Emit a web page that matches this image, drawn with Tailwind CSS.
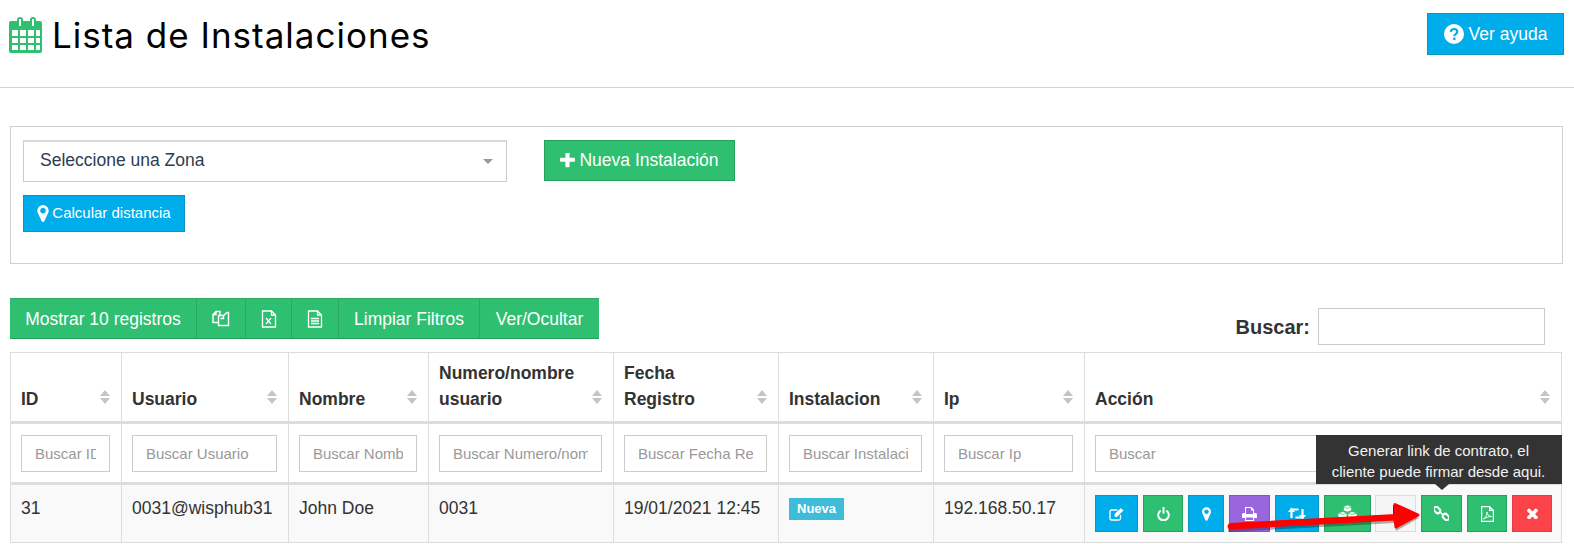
<!DOCTYPE html>
<html lang="es">
<head>
  <meta charset="UTF-8">
  <title>Lista de Instalaciones</title>
  <script src="https://cdn.jsdelivr.net/npm/@tailwindcss/browser@4"></script>
</head>
<body class="bg-white font-['Liberation_Sans',Arial,sans-serif] text-[17.500px] text-[#333] h-[544px] w-[1574px] overflow-hidden relative">
  <!-- cabecera -->
  <header class="h-[88px] border-b border-[#d4d4d4] flex items-start justify-between pl-[9px] pr-[10px]">
    <h1 class="flex items-center gap-[9px] pt-[15px] text-black font-['Inter',sans-serif] text-[35px] tracking-[1px] leading-[40px] font-normal">
      <svg class="w-[34px] h-[36px]" viewBox="0 0 34 36"><path fill="#2fbf71" fill-rule="evenodd" d="M3 4h5V3a3 3 0 0 1 6 0v1h7V3a3 3 0 0 1 6 0v1h4a2 2 0 0 1 2 2v28a2 2 0 0 1-2 2H2a2 2 0 0 1-2-2V6a2 2 0 0 1 2-2zM10 2v7h2V2zM23 2v7h2V2zM3 13v6h6v-6zm8 0v6h6v-6zm8 0v6h6v-6zm8 0v6h4v-6zM3 21v5h6v-5zm8 0v5h6v-5zm8 0v5h6v-5zm8 0v5h4v-5zM3 28v5h6v-5zm8 0v5h6v-5zm8 0v5h6v-5zm8 0v5h4v-5z"/></svg>
      Lista de Instalaciones
    </h1>
    <button class="mt-[13px] w-[137px] h-[42px] bg-[#00adeb] border border-[#0e93c6] text-white text-[17.500px] flex items-center justify-center gap-[5px]">
      <svg class="w-[20px] h-[20px]" viewBox="0 0 20 20"><circle cx="10" cy="10" r="10" fill="#fff"/><path d="M6.800 7.800C7 5.800 8.400 5 10 5c1.900 0 3.300 1.100 3.300 2.800 0 2.400-3 2.400-3 4.400" fill="none" stroke="#00adeb" stroke-width="2.200"/><rect x="9.100" y="13.600" width="2.400" height="2.400" fill="#00adeb"/></svg>
      Ver ayuda
    </button>
  </header>

  <!-- filtros -->
  <section class="ml-[10px] mt-[38px] w-[1553px] h-[138px] border border-[#ccd2d2] pl-[12px] pt-[13px]">
    <div class="flex items-start gap-[37px]">
      <div class="w-[484px] h-[42px] border border-[#cccccc] border-t-[2px] border-t-[#d8d8d8] flex items-center justify-between pl-[16px] pr-[13px] text-[#2c3e50]">
        <span class="-mt-[2px]">Seleccione una Zona</span>
        <span class="w-0 h-0 border-x-[5px] border-x-transparent border-t-[5px] border-t-[#999]"></span>
      </div>
      <button class="w-[191px] h-[41px] bg-[#2fbf71] border border-[#25a05e] text-white flex items-center justify-center gap-[4px]">
        <svg class="w-[15px] h-[15px]" viewBox="192 192 1408 1408" fill="#fff"><path d="M1600 736v192q0 40-28 68t-68 28h-416v416q0 40-28 68t-68 28h-192q-40 0-68-28t-28-68v-416h-416q-40 0-68-28t-28-68v-192q0-40 28-68t68-28h416v-416q0-40 28-68t68-28h192q40 0 68 28t28 68v416h416q40 0 68 28t28 68z"/></svg>
        Nueva Instalación
      </button>
    </div>
    <button class="mt-[13px] w-[162px] h-[37px] bg-[#00adeb] border border-[#0e93c6] text-white text-[15px] flex items-center justify-center gap-[3px]">
      <svg class="w-[12px] h-[17px]" viewBox="0 128 1024 1536" fill="#fff"><path d="M768 640q0-106-75-181t-181-75-181 75-75 181 75 181 181 75 181-75 75-181zm256 0q0 109-33 179l-364 774q-16 33-47.500 52t-67.500 19-67.500-19-46.500-52l-365-774q-33-70-33-179 0-212 150-362t362-150 362 150 150 362z"/></svg>
      Calcular distancia
    </button>
  </section>

  <!-- barra -->
  <div class="ml-[10px] mt-[34px] flex items-start justify-between w-[1553px] h-[54px]">
    <div class="flex h-[41px] bg-[#2fbf71] border-y border-t-[#2fa866] border-b-[#25a05e] text-white">
      <span class="w-[187px] pt-[1px] flex items-center justify-center border-r border-[#29aa63]">Mostrar 10 registros</span>
      <span class="w-[49px] flex items-center justify-center border-r border-[#29aa63]">
        <svg class="w-[18px] h-[18px]" viewBox="0 0 18 18" fill="none" stroke="#fff" stroke-width="1.400"><path d="M8 5V1.500H4L1 4.500v8h5M4 1.500v3H1"/><path d="M6.500 5.500h5l3.500-3h1.500v13h-10zM11.500 5.500v3h-3"/></svg>
      </span>
      <span class="w-[46px] flex items-center justify-center border-r border-[#29aa63]">
        <svg class="w-[16px] h-[18px]" viewBox="0 0 16 18" fill="none" stroke="#fff" stroke-width="1.300"><path d="M1.500 1h9l4 4v12h-13zM10.500 1v4h4"/><path d="M5 8l5 6M10 8l-5 6" stroke-width="1.200"/></svg>
      </span>
      <span class="w-[47px] flex items-center justify-center border-r border-[#29aa63]">
        <svg class="w-[16px] h-[18px]" viewBox="0 0 16 18" fill="none" stroke="#fff" stroke-width="1.300"><path d="M1.500 1h9l4 4v12h-13zM10.500 1v4h4M4 8.500h8M4 11h8M4 13.500h8"/></svg>
      </span>
      <span class="w-[141px] pt-[1px] flex items-center justify-center border-r border-[#29aa63]">Limpiar Filtros</span>
      <span class="w-[119px] pt-[1px] flex items-center justify-center">Ver/Ocultar</span>
    </div>
    <label class="flex items-center gap-[8px] mt-[10px] mr-[18px] font-bold text-[20px]">
      Buscar:
      <input class="w-[227px] h-[37px] border border-[#cccccc] bg-white" type="text">
    </label>
  </div>

  <!-- tabla -->
  <table class="ml-[10px] w-[1552px] table-fixed border-collapse">
    <colgroup>
      <col class="w-[111px]"><col class="w-[167px]"><col class="w-[140px]"><col class="w-[185px]"><col class="w-[165px]"><col class="w-[155px]"><col class="w-[151px]"><col>
    </colgroup>
    <thead>
      <tr class="h-[70px] text-left font-bold text-[#333]">
        <th class="border border-[#dddddd] border-b-[3px] pl-[10px] pr-[11px] pb-[9px] align-bottom leading-[26px]"><div class="flex items-end justify-between">ID<span class="flex flex-col gap-[2px] mb-[8px]"><i class="block border-x-[5px] border-x-transparent border-b-[6px] border-b-[#c4c4c4]"></i><i class="block border-x-[5px] border-x-transparent border-t-[6px] border-t-[#c4c4c4]"></i></span></div></th>
        <th class="border border-[#dddddd] border-b-[3px] pl-[10px] pr-[11px] pb-[9px] align-bottom leading-[26px]"><div class="flex items-end justify-between">Usuario<span class="flex flex-col gap-[2px] mb-[8px]"><i class="block border-x-[5px] border-x-transparent border-b-[6px] border-b-[#c4c4c4]"></i><i class="block border-x-[5px] border-x-transparent border-t-[6px] border-t-[#c4c4c4]"></i></span></div></th>
        <th class="border border-[#dddddd] border-b-[3px] pl-[10px] pr-[11px] pb-[9px] align-bottom leading-[26px]"><div class="flex items-end justify-between">Nombre<span class="flex flex-col gap-[2px] mb-[8px]"><i class="block border-x-[5px] border-x-transparent border-b-[6px] border-b-[#c4c4c4]"></i><i class="block border-x-[5px] border-x-transparent border-t-[6px] border-t-[#c4c4c4]"></i></span></div></th>
        <th class="border border-[#dddddd] border-b-[3px] pl-[10px] pr-[11px] pb-[9px] align-bottom leading-[26px]"><div class="flex items-end justify-between"><span>Numero/nombre<br>usuario</span><span class="flex flex-col gap-[2px] mb-[8px]"><i class="block border-x-[5px] border-x-transparent border-b-[6px] border-b-[#c4c4c4]"></i><i class="block border-x-[5px] border-x-transparent border-t-[6px] border-t-[#c4c4c4]"></i></span></div></th>
        <th class="border border-[#dddddd] border-b-[3px] pl-[10px] pr-[11px] pb-[9px] align-bottom leading-[26px]"><div class="flex items-end justify-between"><span>Fecha<br>Registro</span><span class="flex flex-col gap-[2px] mb-[8px]"><i class="block border-x-[5px] border-x-transparent border-b-[6px] border-b-[#c4c4c4]"></i><i class="block border-x-[5px] border-x-transparent border-t-[6px] border-t-[#c4c4c4]"></i></span></div></th>
        <th class="border border-[#dddddd] border-b-[3px] pl-[10px] pr-[11px] pb-[9px] align-bottom leading-[26px]"><div class="flex items-end justify-between">Instalacion<span class="flex flex-col gap-[2px] mb-[8px]"><i class="block border-x-[5px] border-x-transparent border-b-[6px] border-b-[#c4c4c4]"></i><i class="block border-x-[5px] border-x-transparent border-t-[6px] border-t-[#c4c4c4]"></i></span></div></th>
        <th class="border border-[#dddddd] border-b-[3px] pl-[10px] pr-[11px] pb-[9px] align-bottom leading-[26px]"><div class="flex items-end justify-between">Ip<span class="flex flex-col gap-[2px] mb-[8px]"><i class="block border-x-[5px] border-x-transparent border-b-[6px] border-b-[#c4c4c4]"></i><i class="block border-x-[5px] border-x-transparent border-t-[6px] border-t-[#c4c4c4]"></i></span></div></th>
        <th class="border border-[#dddddd] border-b-[3px] pl-[10px] pr-[11px] pb-[9px] align-bottom leading-[26px]"><div class="flex items-end justify-between">Acción<span class="flex flex-col gap-[2px] mb-[8px]"><i class="block border-x-[5px] border-x-transparent border-b-[6px] border-b-[#c4c4c4]"></i><i class="block border-x-[5px] border-x-transparent border-t-[6px] border-t-[#c4c4c4]"></i></span></div></th>
      </tr>
      <tr class="h-[61px] text-[15px]">
        <td class="border border-[#dddddd] border-b-[3px] pl-[10px] pr-[11px]"><input class="w-full h-[37px] border border-[#cccccc] px-[13px] placeholder:text-[#999]" placeholder="Buscar ID"></td>
        <td class="border border-[#dddddd] border-b-[3px] pl-[10px] pr-[11px]"><input class="w-full h-[37px] border border-[#cccccc] px-[13px] placeholder:text-[#999]" placeholder="Buscar Usuario"></td>
        <td class="border border-[#dddddd] border-b-[3px] pl-[10px] pr-[11px]"><input class="w-full h-[37px] border border-[#cccccc] px-[13px] placeholder:text-[#999]" placeholder="Buscar Nombre"></td>
        <td class="border border-[#dddddd] border-b-[3px] pl-[10px] pr-[11px]"><input class="w-full h-[37px] border border-[#cccccc] px-[13px] placeholder:text-[#999]" placeholder="Buscar Numero/nombre usuario"></td>
        <td class="border border-[#dddddd] border-b-[3px] pl-[10px] pr-[11px]"><input class="w-full h-[37px] border border-[#cccccc] px-[13px] placeholder:text-[#999]" placeholder="Buscar Fecha Registro"></td>
        <td class="border border-[#dddddd] border-b-[3px] pl-[10px] pr-[11px]"><input class="w-full h-[37px] border border-[#cccccc] px-[13px] placeholder:text-[#999]" placeholder="Buscar Instalacion"></td>
        <td class="border border-[#dddddd] border-b-[3px] pl-[10px] pr-[11px]"><input class="w-full h-[37px] border border-[#cccccc] px-[13px] placeholder:text-[#999]" placeholder="Buscar Ip"></td>
        <td class="border border-[#dddddd] border-b-[3px] pl-[10px] pr-[11px]"><input class="w-full h-[37px] border border-[#cccccc] px-[13px] placeholder:text-[#999]" placeholder="Buscar"></td>
      </tr>
    </thead>
    <tbody>
      <tr class="h-[59px] bg-[#f9f9f9] align-top">
        <td class="border border-[#dddddd] px-[10px] pt-[10px]">31</td>
        <td class="border border-[#dddddd] px-[10px] pt-[10px]">0031@wisphub31</td>
        <td class="border border-[#dddddd] px-[10px] pt-[10px]">John Doe</td>
        <td class="border border-[#dddddd] px-[10px] pt-[10px]">0031</td>
        <td class="border border-[#dddddd] px-[10px] pt-[10px]">19/01/2021 12:45</td>
        <td class="border border-[#dddddd] px-[10px] pt-[13px]"><span class="block w-fit bg-[#3fbcd9] text-white font-bold text-[13px] leading-[22px] px-[8px]">Nueva</span></td>
        <td class="border border-[#dddddd] px-[10px] pt-[10px]">192.168.50.17</td>
        <td class="border border-[#dddddd] pl-[10px] pt-[10px]">
          <div class="flex items-start h-[37px]">
            <span class="w-[43px] h-[37px] bg-[#00adeb] border border-[#0e93c6] flex items-center justify-center">
              <svg class="w-[16px] h-[14px]" viewBox="0 0 16 14" fill="none" stroke="#fff" stroke-width="1.300"><path d="M11.500 8v3.500a1.500 1.500 0 0 1-1.500 1.500H2.500A1.500 1.500 0 0 1 1 11.500v-7A1.500 1.500 0 0 1 2.500 3h6"/><path d="M6 7l6-5.500 2 2L8 9.500H6z" fill="#fff" stroke-width=".8"/></svg>
            </span>
            <span class="ml-[5px] w-[40px] h-[37px] bg-[#2fbf71] border border-[#25a05e] flex items-center justify-center">
              <svg class="w-[13px] h-[14px]" viewBox="0 0 13 14" fill="none" stroke="#fff" stroke-width="2"><path d="M3.600 3.600a5.300 5.300 0 1 0 5.800 0M6.500 0v6.500"/></svg>
            </span>
            <span class="ml-[5px] w-[36px] h-[37px] bg-[#00adeb] border border-[#0e93c6] flex items-center justify-center">
              <svg class="w-[9px] h-[14px]" viewBox="0 128 1024 1536" fill="#fff"><path d="M768 640q0-106-75-181t-181-75-181 75-75 181 75 181 181 75 181-75 75-181zm256 0q0 109-33 179l-364 774q-16 33-47.500 52t-67.500 19-67.500-19-46.500-52l-365-774q-33-70-33-179 0-212 150-362t362-150 362 150 150 362z"/></svg>
            </span>
            <span class="ml-[5px] w-[41px] h-[37px] bg-[#9966dd] border border-[#8355bd] flex items-center justify-center">
              <svg class="w-[15px] h-[14px]" viewBox="0 0 15 14" fill="#fff"><path fill-rule="evenodd" d="M3 0h6.500L12 2.500V6h1.500A1.500 1.500 0 0 1 15 7.500V11h-3v3H3v-3H0V7.500A1.500 1.500 0 0 1 1.500 6H3zM4 1v6h7V3.500H9V1zM4 10.500V13h7v-2.500z"/></svg>
            </span>
            <span class="ml-[5px] w-[44px] h-[37px] bg-[#00adeb] border border-[#0e93c6] flex items-center justify-center">
              <svg class="w-[18px] h-[13px] -mt-[1px]" viewBox="0 0 18 13" fill="none" stroke="#fff" stroke-width="2.200"><path d="M3.500 11V2.500h7M14.500 2v8.500h-7"/><path d="M0 5l3.500-4.500L7 5zM11 8l3.500 4.500L18 8z" fill="#fff" stroke="none"/></svg>
            </span>
            <span class="ml-[5px] w-[47px] h-[37px] bg-[#2fbf71] border border-[#25a05e] flex items-center justify-center">
              <svg class="w-[19px] h-[14px] -mt-[3px]" viewBox="0 0 19 14" fill="#fff" stroke="#2fbf71" stroke-width=".7"><path d="M9.500 0l4 1.500v4l-4 1.500-4-1.500v-4zM5 6.500l4 1.500v4.500L5 14l-5-1.500v-4.500zM14 6.500l5 1.500v4.500L14 14l-4-1.500V8z"/><path d="M5.500 2l4 1.500 4-1.500M0 8l5 1.500L9 8M10 8l4 1.500L19 8" fill="none"/></svg>
            </span>
            <span class="ml-[4px] w-[41px] h-[37px] bg-[#f5f5f5] border border-[#dddddd] flex items-center justify-center">
              <span class="block w-[6px] h-[14px] bg-[#333] -mt-[4px]"></span>
            </span>
            <span class="ml-[5px] w-[41px] h-[37px] bg-[#2fbf71] border border-[#25a05e] flex items-center justify-center">
              <svg class="w-[15px] h-[15px]" viewBox="0 0 15 15" fill="none" stroke="#fff" stroke-width="2"><rect x="-.5" y="1.600" width="7" height="4.800" rx="2.400" transform="rotate(45 3 4)"/><rect x="8.500" y="8.600" width="7" height="4.800" rx="2.400" transform="rotate(45 12 11)"/><path d="M6 6l3 3" stroke-width="1.600"/></svg>
            </span>
            <span class="ml-[5px] w-[40px] h-[37px] bg-[#2fbf71] border border-[#25a05e] flex items-center justify-center">
              <svg class="w-[13px] h-[16px]" viewBox="0 0 13 16" fill="none" stroke="#fff" stroke-width="1.200"><path d="M.6.600h8l3.800 3.800v11H.6zM8.600.600v3.800h3.800"/><path d="M2.500 13c2-1 3.500-4 3.500-7 0 2.500 1.500 4 4.500 4.500-3 0-5.500 1-8 2.500z" stroke-width=".9"/></svg>
            </span>
            <span class="ml-[5px] w-[40px] h-[37px] bg-[#fb4349] border border-[#e63c42] flex items-center justify-center">
              <svg class="w-[11px] h-[11px]" viewBox="306 306 1184 1184" fill="#fff"><path d="M1490 1322q0 40-28 68l-136 136q-28 28-68 28t-68-28l-294-294-294 294q-28 28-68 28t-68-28l-136-136q-28-28-28-68t28-68l294-294-294-294q-28-28-28-68t28-68l136-136q28-28 68-28t68 28l294 294 294-294q28-28 68-28t68 28l136 136q28 28 28 68t-28 68l-294 294 294 294q28 28 28 68z"/></svg>
            </span>
          </div>
        </td>
      </tr>
    </tbody>
  </table>

  <!-- tooltip sobre la tabla -->
  <div class="absolute left-[1316px] top-[435px] w-[246px] h-[49px] bg-[#333333] text-[#f2f2f2] text-[15px] leading-[21px] text-center pt-[5px] pr-[1px]">
    Generar link de contrato, el<br>cliente puede firmar desde aqui.
    <span class="absolute left-[119px] top-[49px] w-0 h-0 border-x-[7px] border-x-transparent border-t-[6px] border-t-[#333333]"></span>
  </div>

  <!-- flecha -->
  <svg class="absolute left-0 top-0 pointer-events-none" width="1574" height="544" viewBox="0 0 1574 544">
    <g fill="#000" opacity=".3" transform="translate(0 3)"><path d="M1228 524l168-9v-10l23 10-23 13-1-8-167 9z"/></g>
    <path d="M1230 524.500l166-9-1-11 23 10.500-22 12-1-8-165 9a2.500 2.500 0 0 1 0-3.500z" fill="#fe0000" stroke="#fe0000" stroke-width="3" stroke-linejoin="round"/>
  </svg>
</body>
</html>
